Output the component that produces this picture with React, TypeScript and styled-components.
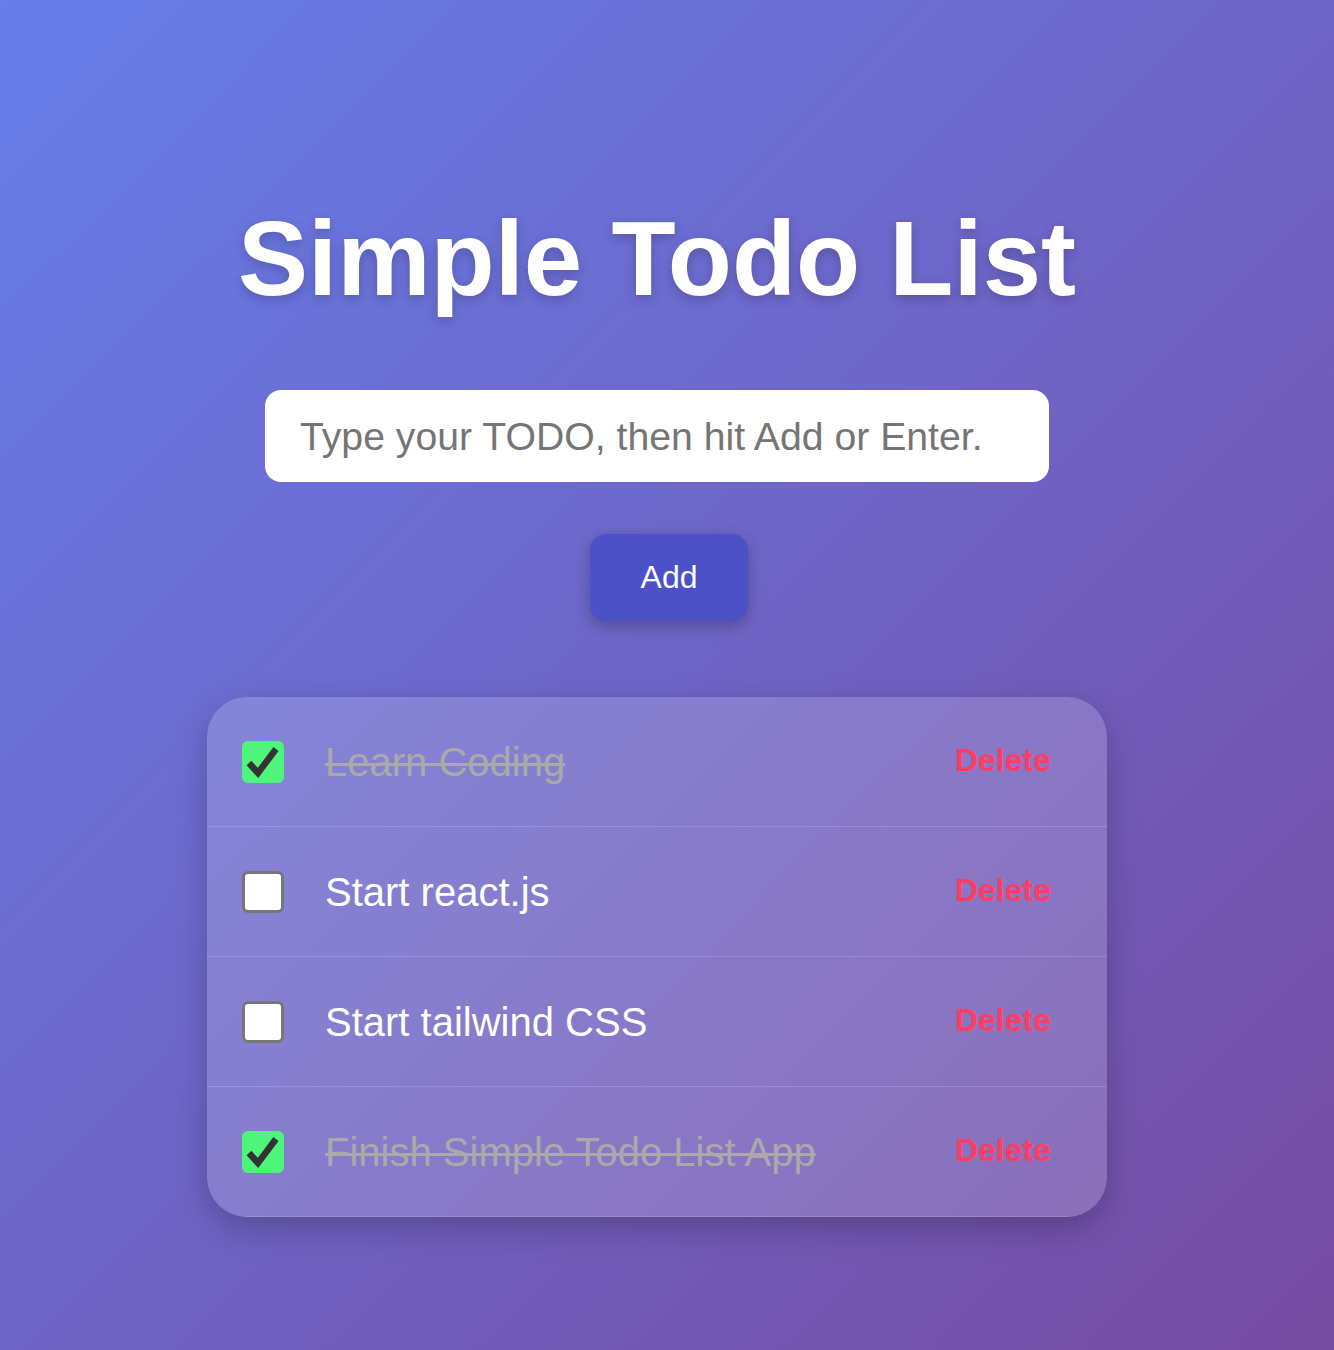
import React, { useState } from "react";
import styled, { createGlobalStyle } from "styled-components";

const GlobalStyle = createGlobalStyle`
  html, body { margin: 0; padding: 0; }
  body {
    font-family: "Liberation Sans", Arial, sans-serif;
    min-height: 100vh;
    background: linear-gradient(135deg, #667eea 0%, #764ba2 100%);
    background-attachment: fixed;
  }
  * { box-sizing: border-box; }
`;

const Page = styled.main`
  min-height: 1350px;
  display: flex;
  flex-direction: column;
  align-items: center;
  padding: 201px 20px 0 0;
`;

const Title = styled.h1`
  margin: 0 0 73px;
  font-size: 105px;
  line-height: 116px;
  font-weight: 700;
  color: #fff;
  text-shadow: 0 4px 12px rgba(0, 0, 0, 0.2);
`;

const TodoInput = styled.input`
  width: 784px;
  height: 92px;
  padding: 2px 35px 0;
  border: none;
  border-radius: 16px;
  background: #fff;
  font-family: "Liberation Sans", Arial, sans-serif;
  font-size: 39.2px;
  color: #333;
  outline: none;
  margin-bottom: 52px;
  &::placeholder { color: #757575; }
`;

const AddButton = styled.button`
  width: 158px;
  height: 87px;
  border: none;
  border-radius: 16px;
  background: #4c51c7;
  color: #fff;
  font-family: "Liberation Sans", Arial, sans-serif;
  font-size: 32px;
  cursor: pointer;
  box-shadow: 0 5px 15px rgba(0, 0, 0, 0.25);
  margin: 0 0 76px 24px;
`;

const Card = styled.ul`
  width: 900px;
  margin: 0;
  padding: 0;
  list-style: none;
  border-radius: 40px;
  background: rgba(255, 255, 255, 0.17);
  box-shadow: 0 12px 32px rgba(0, 0, 0, 0.22);
  overflow: hidden;
`;

const Row = styled.li`
  height: 130px;
  display: flex;
  align-items: center;
  padding: 0 35px;
  border-bottom: 1px solid rgba(255, 255, 255, 0.15);
`;

const Box = styled.button<{ $checked: boolean }>`
  width: 42px;
  height: 42px;
  flex: none;
  padding: 0;
  display: flex;
  align-items: center;
  justify-content: center;
  border-radius: 6px;
  cursor: pointer;
  background: ${(p) => (p.$checked ? "#4ff57a" : "#fff")};
  border: ${(p) => (p.$checked ? "none" : "3px solid #777")};
`;

const Label = styled.span<{ $done: boolean }>`
  flex: 1;
  margin-left: 41px;
  font-size: 40px;
  line-height: 46px;
  color: ${(p) => (p.$done ? "#aaaaaa" : "#fff")};
  text-decoration: ${(p) => (p.$done ? "line-through" : "none")};
  text-decoration-thickness: 3px;
`;

const DeleteButton = styled.button`
  border: none;
  background: none;
  padding: 0 21px 2px;
  font-family: "Liberation Sans", Arial, sans-serif;
  font-size: 32px;
  font-weight: 700;
  color: #ff3d63;
  cursor: pointer;
`;

const CheckIcon = () => (
  <svg width="42" height="42" viewBox="0 0 42 42">
    <path d="M7 22 L16 32 L34 8" fill="none" stroke="#333" strokeWidth="6.5" />
  </svg>
);

type Todo = { id: number; text: string; done: boolean };

export default function App() {
  const [todos, setTodos] = useState<Todo[]>([
    { id: 1, text: "Learn Coding", done: true },
    { id: 2, text: "Start react.js", done: false },
    { id: 3, text: "Start tailwind CSS", done: false },
    { id: 4, text: "Finish Simple Todo List App", done: true },
  ]);
  const [value, setValue] = useState("");

  const add = () => {
    if (!value.trim()) return;
    setTodos((t) => [...t, { id: Date.now(), text: value.trim(), done: false }]);
    setValue("");
  };

  return (
    <>
      <GlobalStyle />
      <Page>
        <Title>Simple Todo List</Title>
        <TodoInput
          value={value}
          placeholder="Type your TODO, then hit Add or Enter."
          onChange={(e) => setValue(e.target.value)}
          onKeyDown={(e) => e.key === "Enter" && add()}
        />
        <AddButton onClick={add}>Add</AddButton>
        <Card>
          {todos.map((t) => (
            <Row key={t.id}>
              <Box
                $checked={t.done}
                onClick={() =>
                  setTodos((all) => all.map((x) => (x.id === t.id ? { ...x, done: !x.done } : x)))
                }
              >
                {t.done && <CheckIcon />}
              </Box>
              <Label $done={t.done}>{t.text}</Label>
              <DeleteButton onClick={() => setTodos((all) => all.filter((x) => x.id !== t.id))}>
                Delete
              </DeleteButton>
            </Row>
          ))}
        </Card>
      </Page>
    </>
  );
}
